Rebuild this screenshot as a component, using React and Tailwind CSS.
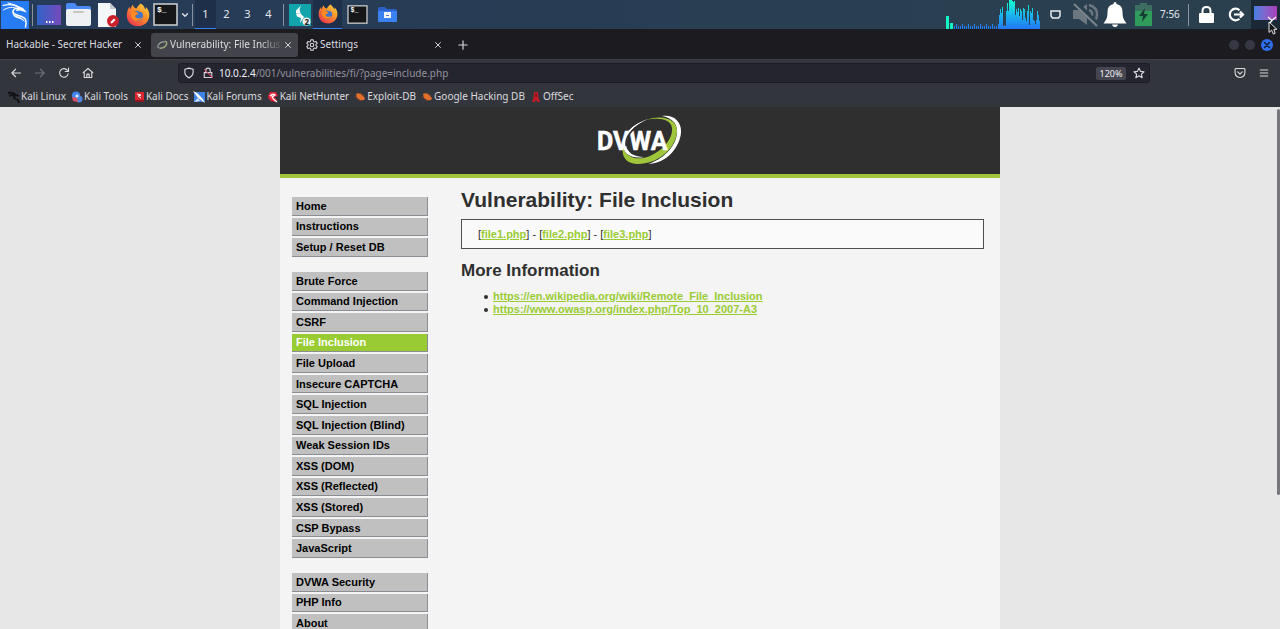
import React from "react";

const Line = ({ d, className = "size-3", w = 1.5 }) => (
  <svg viewBox="0 0 16 16" className={className} fill="none" stroke="currentColor" strokeWidth={w} strokeLinecap="round" strokeLinejoin="round" aria-hidden="true">
    <path d={d} />
  </svg>
);

function KaliDragon() {
  return (
    <svg viewBox="0 0 28 28" className="size-7" aria-hidden="true">
      <rect width="28" height="28" fill="#277bf3" />
      <g fill="none" stroke="#fff" strokeLinecap="round">
        <path d="M2 4.500C8 3 14 4 18 7" strokeWidth="1.2" />
        <path d="M2.500 9C7 6 12 5.500 17 8" strokeWidth="1" />
        <path d="M7 2C12 3 16 4.500 20 7" strokeWidth="1" />
        <path d="M18 7C13 7 11 9.500 12.500 12C15 15.500 22 14 24.500 18.500C25.500 21 25 24 24.500 26" strokeWidth="1.500" />
      </g>
      <path d="M18 5.500L22 7L26 11.500L22.500 10.500L19 9.500L15 10L16 7Z" fill="#fff" />
      <path d="M11 9Q12 14 17 15.500Q22 16.500 24 21Q20 17.500 16 17Q11 15.500 11 9Z" fill="#fff" />
    </svg>
  );
}

function Firefox({ className = "size-6", id }) {
  return (
    <svg viewBox="0 0 24 24" className={className} aria-hidden="true">
      <defs>
        <linearGradient id={id} x1="1" y1="0" x2="0.2" y2="1">
          <stop offset="0" stopColor="#ffe14d" />
          <stop offset="0.45" stopColor="#ff9328" />
          <stop offset="1" stopColor="#e8344f" />
        </linearGradient>
      </defs>
      <path fill={`url(#${id})`} d="M14.500 .5C18 2.500 19 5 19.300 6.300C20.500 5.800 20 4 20 4C22.500 6.500 23.500 9.500 23.300 13C22.800 19 18 23.300 12 23.300C5.500 23.300 .8 18.500.8 12.500C.8 8.500 2 6 3.500 3.500C3.500 5 4 5.800 4.500 6.200C5 4 6 2.500 7 1.800C7.200 4 8.500 5 10.500 5.500C11.500 3.500 13 2 14.500.5Z" />
      <path fill="#3f74c7" d="M6.500 10C8 7.500 11 7 13 8.500C16.500 8.500 18 12 16.500 15C15 18 10.500 18.500 8 16C6.500 14.500 6 12 6.500 10Z" />
      <path fill="#ff8a1f" d="M5 8.500C8 7 10.500 8.500 12.500 10.500C11.500 12 9.500 12 9 13C10 16 14 16 16 14C14.500 19 7.500 19 5.500 14.500C4.700 12.500 4.500 10 5 8.500Z" />
    </svg>
  );
}

const Terminal = ({ className }) => (
  <svg viewBox="0 0 25 23" className={className} aria-hidden="true">
    <rect x="1" y="1" width="23" height="21" fill="#161719" stroke="#c6c8ca" strokeWidth="1.6" />
    <text x="4" y="9" fontSize="8" fontWeight="700" fontFamily="Liberation Mono, monospace" fill="#fff">$_</text>
  </svg>
);

const bars = [14, 20, 16, 22, 3, 4, 3, 18, 26, 18, 30, 29, 30, 28, 27, 28, 14, 20, 17, 21, 13, 20, 18, 9, 21, 20, 11, 8, 18, 24, 4, 18, 16, 21, 9, 8, 5, 9, 18, 14, 8];

function CpuGraph() {
  return (
    <svg viewBox="0 0 94 29" className="h-[29px] w-[94px]" aria-hidden="true">
      <defs>
        <linearGradient id="cpu" x1="0" y1="0" x2="0" y2="29" gradientUnits="userSpaceOnUse">
          <stop offset="0" stopColor="#13ffc9" />
          <stop offset="0.5" stopColor="#19b7ee" />
          <stop offset="1" stopColor="#2376f5" />
        </linearGradient>
      </defs>
      <rect x="0" y="16" width="3" height="13" fill="#14f5c4" />
      <rect x="4" y="23" width="3" height="6" fill="#14f5c4" />
      <g fill="url(#cpu)">
        {Array.from({ length: 23 }, (_, i) => (
          <rect key={i} x={8 + i * 2} y={i % 3 === 1 ? 24 : 26} width="1" height="5" />
        ))}
        {bars.map((h, i) => (
          <rect key={i} x={53 + i} y={29 - h} width="1" height={h} />
        ))}
      </g>
    </svg>
  );
}

const Separator = ({ className }) => <span className={`h-[22px] w-px shrink-0 bg-[#8a94a0] ${className}`} />;

function Panel() {
  const launcher = "flex h-[29px] shrink-0 items-center justify-center";
  return (
    <header className="flex h-[29px] shrink-0 items-center justify-between overflow-hidden bg-linear-to-r from-[#263b58] to-[#2b404e] text-[11px] text-[#e3e7eb]">
      <div className="flex items-center">
        <button aria-label="Applications" className={`${launcher} w-[30px]`}><KaliDragon /></button>
        <Separator className="ml-[2px]" />
        <button aria-label="Show desktop" className={`${launcher} ml-[2px] w-[28px]`}>
          <svg viewBox="0 0 24 20" className="h-5 w-6" aria-hidden="true">
            <defs><linearGradient id="desk"><stop stopColor="#3164c9" /><stop offset="1" stopColor="#7449ba" /></linearGradient></defs>
            <rect width="24" height="20" fill="url(#desk)" />
            <path d="M9 17h1.500M12 17h1.500M15 17h1.500" stroke="#fff" strokeWidth="2" />
          </svg>
        </button>
        <button aria-label="File manager" className={`${launcher} w-[30px]`}>
          <svg viewBox="0 0 25 23" className="h-[23px] w-[25px]" aria-hidden="true">
            <path d="M0 2Q0 0 2 0H9L11 3H23Q25 3 25 5V10H0Z" fill="#4a8af4" />
            <rect y="6" width="25" height="17" rx="2" fill="#eef0f3" />
            <rect x="7" y="8" width="11" height="2" rx="1" fill="#c9c4be" />
          </svg>
        </button>
        <button aria-label="Text editor" className={`${launcher} w-[30px]`}>
          <svg viewBox="0 0 22 24" className="h-6 w-[22px]" aria-hidden="true">
            <path d="M1 0H13L19 6V24H1Z" fill="#f5f6f7" />
            <path d="M13 0V6H19Z" fill="#c5cacf" />
            <circle cx="16" cy="18" r="6" fill="#c9202b" />
            <path d="M13.500 20.500L14 18.500L17 15.500L18.500 17L15.500 20Z" fill="#fff" />
          </svg>
        </button>
        <button aria-label="Firefox" className={`${launcher} w-[29px]`}><Firefox id="fx1" /></button>
        <button aria-label="Terminal" className={`${launcher} w-[27px]`}><Terminal className="h-[23px] w-[25px]" /></button>
        <button aria-label="More terminals" className={`${launcher} w-[11px]`}><Line d="M3 5.500L8 10.500L13 5.500" className="size-2" w={2.5} /></button>
        <Separator className="ml-[2px]" />
        <nav aria-label="Workspaces" className="ml-[2px] flex">
          {[1, 2, 3, 4].map((n) => (
            <button key={n} className={`h-[29px] w-[21px] border-b ${n === 1 ? "border-[#3381f3] bg-[#1e2f49]" : "border-transparent"}`}>{n}</button>
          ))}
        </nav>
        <Separator className="ml-[4px]" />
        <button aria-label="Burp Suite" className={`${launcher} ml-[3px] w-[26px]`}>
          <svg viewBox="0 0 22 22" className="size-[22px]" aria-hidden="true">
            <rect width="22" height="22" fill="#12a4ad" />
            <path d="M12 1.500L7 6.500V9L11.500 9.500L10.500 5Z M7 9.500L11.500 9.500L15 13L11 19L12 14L8 12.500Z" fill="#fff" />
            <circle cx="17.500" cy="17.500" r="4" fill="#eee" />
            <text x="15.500" y="20.500" fontSize="8" fontWeight="700" fontFamily="Noto Sans, sans-serif" fill="#222">2</text>
          </svg>
        </button>
        <button aria-label="Firefox window" className={`${launcher} w-[29px] border-b border-[#3381f3] bg-[#1e2f49]`}><Firefox id="fx2" className="size-5" /></button>
        <button aria-label="Terminal window" className={`${launcher} w-[30px]`}><Terminal className="h-[19px] w-[21px]" /></button>
        <button aria-label="Files window" className={`${launcher} w-[30px]`}>
          <svg viewBox="0 0 19 15" className="h-[15px] w-[19px]" aria-hidden="true">
            <path d="M0 2Q0 0 2 0H7L9 2H17Q19 2 19 4V13Q19 15 17 15H2Q0 15 0 13Z" fill="#2c62c9" />
            <rect y="4" width="19" height="11" rx="1" fill="#3a82f2" />
            <rect x="6" y="5" width="7" height="6" fill="#f2f5fb" />
            <path d="M8 8.500H11" stroke="#5c7fb8" />
          </svg>
        </button>
      </div>
      <div className="flex items-center">
        <CpuGraph />
        <svg viewBox="0 0 11 9" className="ml-[10px] h-[9px] w-[11px]" aria-hidden="true">
          <path d="M1 1H10V6L8.500 8H2.500L1 6Z" fill="none" stroke="#e9edf0" strokeWidth="1.500" />
        </svg>
        <svg viewBox="0 0 26 24" className="ml-[12px] h-6 w-[26px]" aria-label="Muted">
          <path d="M0 7H6L14 1V22L6 16H0Z" fill="#6d7780" />
          <path d="M16 2Q24 4 24 11.500Q24 15 22 18M16 7Q20 8 19 13" fill="none" stroke="#6d7780" strokeWidth="2.500" />
          <path d="M3 0L25 22" stroke="#2b404e" strokeWidth="5" />
          <path d="M1 1L24 23" stroke="#7b848c" strokeWidth="2" />
        </svg>
        <svg viewBox="0 0 24 25" className="ml-[4px] h-[25px] w-6" aria-label="Notifications">
          <path d="M12 0Q13.500 0 13.500 2Q19.500 3 19.500 10Q19.500 16 21.500 18.500L23.500 21.500H.5L2.500 18.500Q4.500 16 4.500 10Q4.500 3 10.500 2Q10.500 0 12 0ZM9 22.500H15Q14.500 25 12 25Q9.500 25 9 22.500Z" fill="#fff" />
        </svg>
        <svg viewBox="0 0 17 23" className="ml-[8px] h-[23px] w-[17px]" aria-label="Battery charging">
          <path d="M5 0H12V2H17V23H0V2H5Z" fill="#2f9c5c" />
          <path d="M5 0H12V2H17V8H0V2H5Z" fill="#3d6e60" />
          <path d="M10 5L4 13H8L7 19L13 11H9Z" fill="#193b34" />
        </svg>
        <time className="ml-[8px] w-[22px] text-[10px] whitespace-nowrap">7:56</time>
        <Separator className="ml-[6px]" />
        <button aria-label="Lock" className="ml-[10px]">
          <svg viewBox="0 0 15 17" className="h-[17px] w-[15px]" aria-hidden="true">
            <path d="M3.500 8V5Q3.500 1 7.500 1Q11.500 1 11.500 5V8" fill="none" stroke="#fff" strokeWidth="2" />
            <rect y="7" width="15" height="10" rx="1" fill="#fff" />
          </svg>
        </button>
        <button aria-label="Log out" className="ml-[14px]">
          <svg viewBox="0 0 17 15" className="h-[15px] w-[17px]" fill="none" stroke="#fff" strokeWidth="2.200" aria-hidden="true">
            <path d="M11.500 3.200A5.800 5.800 0 1 0 11.500 11.800M6 7.500H15M12 4.500L15 7.500L12 10.500" />
          </svg>
        </button>
        <div className="relative ml-[6px] h-[29px] w-[29px] bg-[#1b2836]">
          <span className="mt-[6px] ml-[3px] block h-[14px] w-[23px] bg-linear-to-r from-[#3f7fe0] to-[#a83cb8]" />
          <svg viewBox="0 0 10 10" className="absolute top-[16px] left-[16px] size-[10px]" aria-hidden="true">
            <path d="M1 1L5 4.500L9 1M5 4.500L2 8" fill="none" stroke="#fff" strokeWidth="1.300" />
          </svg>
        </div>
      </div>
    </header>
  );
}

const Close = () => <Line d="M4 4L12 12M12 4L4 12" className="size-[10px]" />;

function TabBar() {
  return (
    <div className="flex h-[30px] shrink-0 items-center justify-between bg-[#1b1b20] pt-px text-[10px] text-[#dcdce0]">
      <div role="tablist" className="flex items-center">
        <div role="tab" className="flex h-6 w-[151px] items-center justify-between pr-[8px] pl-[6px]">
          <span className="whitespace-nowrap">Hackable - Secret Hacker</span>
          <button aria-label="Close Hackable - Secret Hacker"><Close /></button>
        </div>
        <div role="tab" aria-selected="true" className="flex h-6 w-[147px] items-center rounded-[3px] bg-[#43434b] pr-[5px] pl-[5px]">
          <svg viewBox="0 0 16 16" className="size-3 shrink-0" fill="none" aria-hidden="true">
            <path d="M5 12Q1 12 3 8Q6 3 12 4" stroke="#94a29c" strokeWidth="1.500" />
            <path d="M12 3Q16 4 13 9Q10 13 5 12" stroke="#9aa57e" strokeWidth="2" />
          </svg>
          <span className="ml-[2px] min-w-0 flex-1 overflow-hidden mask-r-from-80% whitespace-nowrap">Vulnerability: File Inclusion</span>
          <button aria-label="Close Vulnerability"><Close /></button>
        </div>
        <div role="tab" className="flex h-6 w-[150px] items-center pr-[5px] pl-[8px]">
          <svg viewBox="0 0 16 16" className="size-3" fill="none" stroke="currentColor" strokeWidth="1.400" strokeLinejoin="round" aria-hidden="true">
            <path d="M6.600 1H9.400L10 3.200L11.300 3.900L13.500 3.300L14.900 5.700L13.300 7.300V8.700L14.900 10.300L13.500 12.700L11.300 12.100L10 12.800L9.400 15H6.600L6 12.800L4.700 12.100L2.500 12.700L1.100 10.300L2.700 8.700V7.300L1.100 5.700L2.500 3.300L4.700 3.900L6 3.200Z" />
            <circle cx="8" cy="8" r="2.300" />
          </svg>
          <span className="ml-[2px] flex-1">Settings</span>
          <button aria-label="Close Settings"><Close /></button>
        </div>
        <button aria-label="New tab" className="ml-[9px]"><Line d="M8 2.500V13.500M2.500 8H13.500" /></button>
      </div>
      <div className="flex items-center gap-[6px] pr-[7px]">
        <button aria-label="Minimize" className="size-[10px] rounded-full bg-[#363944]" />
        <button aria-label="Maximize" className="size-[10px] rounded-full bg-[#363944]" />
        <button aria-label="Close window" className="flex size-3 items-center justify-center rounded-full bg-[#2d71ee] text-[#111d3c]">
          <Line d="M4 4L12 12M12 4L4 12" className="size-[10px]" w={2.500} />
        </button>
      </div>
    </div>
  );
}

const bookmarks = [
  ["Kali Linux", <svg viewBox="0 0 12 12" className="size-3"><path d="M0 2Q5 1 8 4L11 5M1 5Q5 3 7 5Q4 7 8 8Q11 9 11 12" fill="none" stroke="#111216" strokeWidth="1.800" /></svg>],
  ["Kali Tools", <svg viewBox="0 0 12 12" className="size-3"><circle cx="5" cy="4.500" r="4" fill="#3f86f4" /><circle cx="8" cy="8" r="3.500" fill="#4c83dd" /><path d="M1 6L6 7L7 11L2 10Z" fill="#df4c62" /><circle cx="6" cy="5" r="1.600" fill="#dce8ff" /></svg>],
  ["Kali Docs", <svg viewBox="0 0 12 12" className="size-3"><path d="M2 1H11V11H2Z" fill="#dd2530" /><path d="M2 9H11V11H2Z" fill="#8d1520" /><path d="M4 3L8 4L5 5L8 7" fill="none" stroke="#fff" /></svg>],
  ["Kali Forums", <svg viewBox="0 0 12 12" className="size-3"><rect x="1" y="1" width="11" height="10" fill="#3d84e5" /><path d="M0 0L4 2L9 7L12 12L5 7Z" fill="#fff" /><path d="M1 11L5 7L7 10Z" fill="#cfe0f5" /></svg>],
  ["Kali NetHunter", <svg viewBox="0 0 12 12" className="size-3"><path d="M3 1H9L11 5L7 6L10 9L8 11Q1 10 1 5Z" fill="#e3253a" /><path d="M3 5Q6 2 8 4L5 6Q6 8 10 11" fill="none" stroke="#fff" strokeWidth="1.300" /></svg>],
  ["Exploit-DB", <svg viewBox="0 0 12 12" className="size-3"><path d="M2 3Q5 1 8 4L11 7L10 9Q6 10 3 7Z" fill="#e2702b" /><path d="M1 5L4 8L7 10M6 2L10 5" stroke="#8a4528" fill="none" /></svg>],
  ["Google Hacking DB", <svg viewBox="0 0 12 12" className="size-3"><path d="M2 3Q5 1 8 4L11 7L10 9Q6 10 3 7Z" fill="#e2702b" /><path d="M1 5L4 8L7 10M6 2L10 5" stroke="#8a4528" fill="none" /></svg>],
  ["OffSec", <svg viewBox="0 0 12 12" className="size-3"><path d="M4 1H8L8.500 7L10 11H7L6 8L5 11H2L3.500 7Z" fill="#c41c25" /><path d="M6 2V6" stroke="#571116" /></svg>],
];

function Toolbar() {
  return (
    <div className="flex h-12 shrink-0 flex-col border-t border-[#3d3e46] bg-[#33353c] text-[10px] text-[#dadbdf]">
      <div className="flex h-[26px] items-center pr-[10px] pl-[10px]">
        <div className="flex w-[168px] items-center gap-3">
          <button aria-label="Back"><Line d="M14 8H2.500M7.500 3L2.500 8L7.500 13" /></button>
          <button aria-label="Forward" className="text-[#70727a]"><Line d="M2 8H13.500M8.500 3L13.500 8L8.500 13" /></button>
          <button aria-label="Reload"><Line d="M13.500 9A5.700 5.700 0 1 1 12.500 4.500M14 1.500V6H9.500" /></button>
          <button aria-label="Home"><Line d="M1.500 7.500L8 2L14.500 7.500M3 7V14H13V7M6.500 14V9.500H9.500V14" /></button>
        </div>
        <div className="flex h-5 min-w-0 flex-1 items-center rounded-[3px] border border-[#1c1b26] bg-[#252530] px-[4px]">
          <Line d="M8 1.500L13.500 3V7.500Q13 12 8 14.500Q3 12 2.500 7.500V3Z" />
          <svg viewBox="0 0 16 16" className="ml-[7px] size-3" fill="none" aria-hidden="true">
            <path d="M5 7V4.500Q5 1.500 8 1.500Q11 1.500 11 4.500V7M3 7.500H13V14H3Z" stroke="#d4d4d9" strokeWidth="1.500" />
            <path d="M3 3L14 14" stroke="#e6436c" strokeWidth="1.400" />
          </svg>
          <a href="#url" className="ml-[5px] flex-1 whitespace-nowrap text-[#92929c]"><span className="text-[#f0f0f4]">10.0.2.4</span>/001/vulnerabilities/fi/?page=include.php</a>
          <button className="h-[13px] w-[30px] rounded-[2px] bg-[#45464f] text-[9px] leading-[13px] text-[#f0f0f4]">120%</button>
          <button aria-label="Bookmark" className="ml-[7px]"><Line d="M8 1.500L10 5.800L14.700 6.300L11.200 9.500L12.200 14.200L8 11.800L3.800 14.200L4.800 9.500L1.300 6.300L6 5.800Z" /></button>
        </div>
        <div className="ml-[84px] flex items-center gap-3">
          <button aria-label="Pocket"><Line d="M1.500 3Q1.500 2 2.500 2H13.500Q14.500 2 14.500 3V7Q14.500 13.500 8 14Q1.500 13.500 1.500 7ZM5 6.500L8 9.500L11 6.500" /></button>
          <button aria-label="Menu"><Line d="M3 4H13M3 8H13M3 12H13" /></button>
        </div>
      </div>
      <nav aria-label="Bookmarks" className="flex h-[21px] items-center gap-[5px] pl-[8px]">
        {bookmarks.map(([name, icon]) => (
          <a key={name} href="#bookmark" className="flex items-center gap-px whitespace-nowrap">{icon}{name}</a>
        ))}
      </nav>
    </div>
  );
}

function Menu({ items, className }) {
  return (
    <ul className={`grid auto-rows-fr gap-[2px] ${className}`}>
      {items.map((item) => (
        <li key={item} className={`min-h-0 border-r border-b border-[#8c8c94] ${item === "File Inclusion" ? "bg-[#99cc33] text-white" : "bg-[#c0c0c0] text-black"}`}>
          <a href="#menu" className="flex h-full items-center px-[4px] leading-[16px]">{item}</a>
        </li>
      ))}
    </ul>
  );
}

function Logo() {
  return (
    <svg viewBox="0 0 88 52" className="h-[52px] w-[88px]" role="img" aria-label="DVWA">
      <path d="M66 1C78 -1 86 7 85 18C83 35 68 49 52 49C66 45 80 32 81 18C82 9 76 3 66 1Z" fill="#fff" />
      <path d="M50 5C66 -1 82 4 81 17C79 35 61 49 42 49C31 49 25 42 27 32C30 43 42 46 54 41C68 35 77 23 76 13C75 4 63 2 50 5Z" fill="#9fc63b" />
      <path d="M52 4C36 9 26 20 27 31C28 40 37 44 48 42C37 42 31 37 30 30C29 20 38 10 52 4Z" fill="#fff" />
      <text x="1" y="35" fontSize="25" fontWeight="700" fontFamily="Roboto, sans-serif" fill="#fff" stroke="#fff" strokeWidth="0.500">DVWA</text>
      <path d="M45 9C35 15 29 22 30 31" fill="none" stroke="#2f2f2f" strokeWidth="1.500" />
    </svg>
  );
}

const link = "font-bold text-[#99cc33] underline";
const bullet = "flex items-center gap-[5px] before:size-[4px] before:rounded-full before:bg-[#2f2f2f]";

function Page() {
  return (
    <div className="relative flex min-h-0 flex-1 justify-center overflow-hidden bg-[#e7e7e7] font-['Liberation_Sans',Arial,sans-serif]">
      <div className="h-max min-h-full w-9/16 bg-[#f4f4f4]">
        <div className="flex h-[71px] items-center justify-center border-b-4 border-[#a1c63c] bg-[#2f2f2f]">
          <Logo />
        </div>
        <div className="flex px-3">
          <nav aria-label="DVWA" className="mt-[19px] flex w-[136px] shrink-0 flex-col gap-[15px] text-[11px] font-bold">
            <Menu className="h-[60px]" items={["Home", "Instructions", "Setup / Reset DB"]} />
            <Menu className="h-[286px]" items={["Brute Force", "Command Injection", "CSRF", "File Inclusion", "File Upload", "Insecure CAPTCHA", "SQL Injection", "SQL Injection (Blind)", "Weak Session IDs", "XSS (DOM)", "XSS (Reflected)", "XSS (Stored)", "CSP Bypass", "JavaScript"]} />
            <Menu className="h-[60px]" items={["DVWA Security", "PHP Info", "About"]} />
          </nav>
          <main className="mt-[9px] mr-[4px] ml-[33px] min-w-0 flex-1 text-[11px] text-[#2f2f2f]">
            <h1 className="text-[21px] leading-[26px] font-bold">Vulnerability: File Inclusion</h1>
            <div className="mt-[6px] flex h-[30px] items-center border border-[#4f4f4f] bg-[#fafafa] px-4">
              <p>[<a href="#file1" className={link}>file1.php</a>] - [<a href="#file2" className={link}>file2.php</a>] - [<a href="#file3" className={link}>file3.php</a>]</p>
            </div>
            <h2 className="mt-[12px] text-[17px] leading-[20px] font-bold">More Information</h2>
            <ul className="mt-[9px] pl-[23px] leading-[13px]">
              <li className={bullet}><a href="#rfi" className={link}>https://en.wikipedia.org/wiki/Remote_File_Inclusion</a></li>
              <li className={bullet}><a href="#owasp" className={link}>https://www.owasp.org/index.php/Top_10_2007-A3</a></li>
            </ul>
          </main>
        </div>
      </div>
      <span className="absolute top-[2px] right-0 h-[386px] w-[3px] rounded-full bg-[#77787c]" />
    </div>
  );
}

export default function App() {
  return (
    <div className="relative flex h-screen flex-col overflow-hidden font-['Noto_Sans',sans-serif]">
      <Panel />
      <TabBar />
      <Toolbar />
      <Page />
      <svg viewBox="0 0 12 16" className="absolute top-[21px] right-[2px] h-[14px] w-[11px]" aria-hidden="true">
        <path d="M2 1V13L5 10.500L7 15L9 14L7.500 9.500H11Z" fill="#15161a" stroke="#fff" />
      </svg>
    </div>
  );
}
